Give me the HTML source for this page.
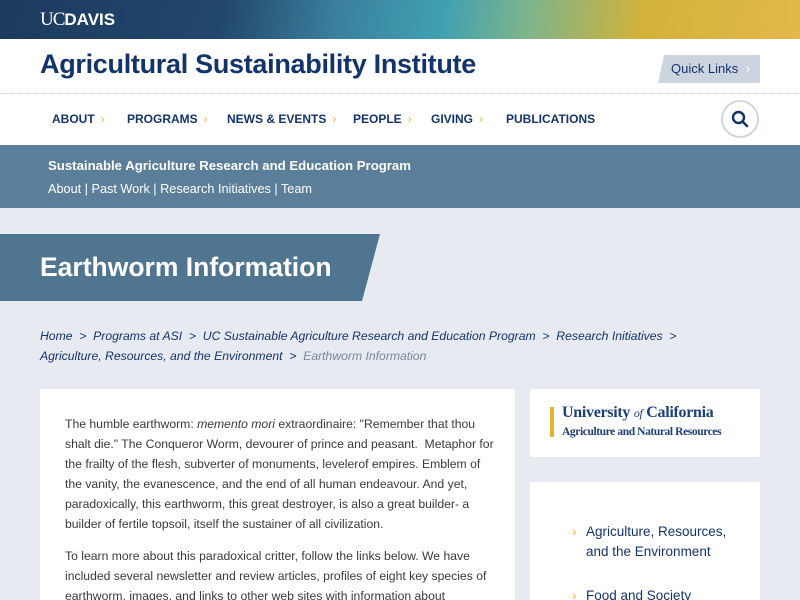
<!DOCTYPE html>
<html><head><style>
*{margin:0;padding:0;box-sizing:border-box}
html,body{width:800px;height:600px;overflow:hidden}
body{background:#e7eaf0;font-family:"Liberation Sans",sans-serif;position:relative}
.top{position:absolute;left:0;top:0;width:800px;height:39px;background:linear-gradient(100deg,#1d3a5e 0%,#22476d 28%,#3b7f9c 42%,#3fa0b2 55%,#7fb48a 66%,#d2b23a 80%,#e3b84b 100%)}
.ucd{position:absolute;left:40px;top:9px;color:#fff;font-size:19px;font-family:"Liberation Serif",serif;letter-spacing:-1px}
.ucd b{font-family:"Liberation Sans",sans-serif;font-weight:bold;font-size:17px;letter-spacing:0}
.hdr{position:absolute;top:39px;left:0;width:800px;height:106px;background:#fff}
.title{position:absolute;left:40px;top:49px;font-size:27px;font-weight:bold;color:#13346b;letter-spacing:-0.3px}
.ql{position:absolute;left:658px;top:55px;width:102px;height:28px;background:#ccd5df;color:#13346b;font-size:13px;line-height:28px;padding-left:13px;clip-path:polygon(6px 0,100% 0,100% 100%,0 100%)}
.dots{position:absolute;top:93px;left:0;width:800px;border-top:1px dotted #ccc}
.nav span{position:absolute;top:112px;font-size:12px;font-weight:bold;color:#13346b;white-space:nowrap}
.nav i{color:#e2b53a;font-style:normal;font-weight:normal;margin-left:6px}
.srch{position:absolute;left:721px;top:100px;width:38px;height:38px;border:2px solid #cfd6e0;border-radius:50%}
.sub{position:absolute;top:145px;left:0;width:800px;height:63px;background:#5b7f9a;color:#fff}
.sub h3{position:absolute;left:48px;top:13px;font-size:13.2px}
.sub p{position:absolute;left:48px;top:37px;font-size:12.7px}
.pt{position:absolute;top:234px;left:0;width:380px;height:67px;background:#4f7590;clip-path:polygon(0 0,100% 0,362px 100%,0 100%);color:#fff;font-size:26.5px;font-weight:bold;padding:18px 0 0 40px}
.bc{position:absolute;left:40px;top:326px;font-size:12.2px;color:#13346b;font-style:italic;line-height:20px}
.bc .g{color:#7a8899}
.main{position:absolute;left:40px;top:389px;width:475px;height:220px;background:#fff;padding:25px 18px 0 25px;font-size:12.2px;color:#3a3a3a;line-height:20px}
.main p{margin-bottom:12px}
.side1{position:absolute;left:530px;top:389px;width:230px;height:68px;background:#fff}
.side2{position:absolute;left:530px;top:482px;width:230px;height:130px;background:#fff}
</style></head><body>
<div class="top"></div>
<div class="ucd">UC<b>DAVIS</b></div>
<div class="hdr"></div>
<div class="title">Agricultural Sustainability Institute</div>
<div class="ql">Quick Links <span style="color:#fff;margin-left:4px">›</span></div>
<div class="dots"></div>
<div class="nav"><span style="left:52px">ABOUT<i>›</i></span><span style="left:127px">PROGRAMS<i>›</i></span><span style="left:227px">NEWS &amp; EVENTS<i>›</i></span><span style="left:353px">PEOPLE<i>›</i></span><span style="left:431px">GIVING<i>›</i></span><span style="left:506px">PUBLICATIONS</span></div>
<div class="srch"><svg width="34" height="34" viewBox="0 0 34 34"><circle cx="15.5" cy="15.5" r="5.5" fill="none" stroke="#13346b" stroke-width="2.4"/><line x1="19.5" y1="19.5" x2="24" y2="24" stroke="#13346b" stroke-width="2.6" stroke-linecap="round"/></svg></div>
<div class="sub"><h3>Sustainable Agriculture Research and Education Program</h3><p>About | Past Work | Research Initiatives | Team</p></div>
<div class="pt">Earthworm Information</div>
<div class="bc">Home &nbsp;&gt;&nbsp; Programs at ASI &nbsp;&gt;&nbsp; UC Sustainable Agriculture Research and Education Program &nbsp;&gt;&nbsp; Research Initiatives &nbsp;&gt;<br>Agriculture, Resources, and the Environment &nbsp;&gt;&nbsp; <span class="g">Earthworm Information</span></div>
<div class="main"><p>The humble earthworm: <i>memento mori</i> extraordinaire: "Remember that thou shalt die." The Conqueror Worm, devourer of prince and peasant.&nbsp; Metaphor for the frailty of the flesh, subverter of monuments, levelerof empires. Emblem of the vanity, the evanescence, and the end of all human endeavour. And yet, paradoxically, this earthworm, this great destroyer, is also a great builder- a builder of fertile topsoil, itself the sustainer of all civilization.</p><p>To learn more about this paradoxical critter, follow the links below. We have included several newsletter and review articles, profiles of eight key species of earthworm, images, and links to other web sites with information about</p></div>
<div class="side1"><div style="position:absolute;left:20px;top:18px;width:4px;height:30px;background:#e9b22b"></div><div style="position:absolute;left:32px;top:15px;font-family:'Liberation Serif',serif;color:#1d3f7a;font-weight:bold;font-size:16px;line-height:18px;letter-spacing:-0.3px;white-space:nowrap">University <i style="font-weight:normal;font-size:12px">of</i> California<br><span style="font-size:11.5px;letter-spacing:-0.4px">Agriculture and Natural Resources</span></div></div>
<div class="side2"><div style="position:absolute;left:56px;top:40px;font-size:13.5px;color:#13346b;line-height:20px"><span style="position:absolute;left:-14px;color:#e2b53a">›</span>Agriculture, Resources,<br>and the Environment</div><div style="position:absolute;left:56px;top:106px;font-size:13.5px;color:#13346b"><span style="position:absolute;left:-14px;color:#e2b53a">›</span>Food and Society</div></div>
</body></html>
